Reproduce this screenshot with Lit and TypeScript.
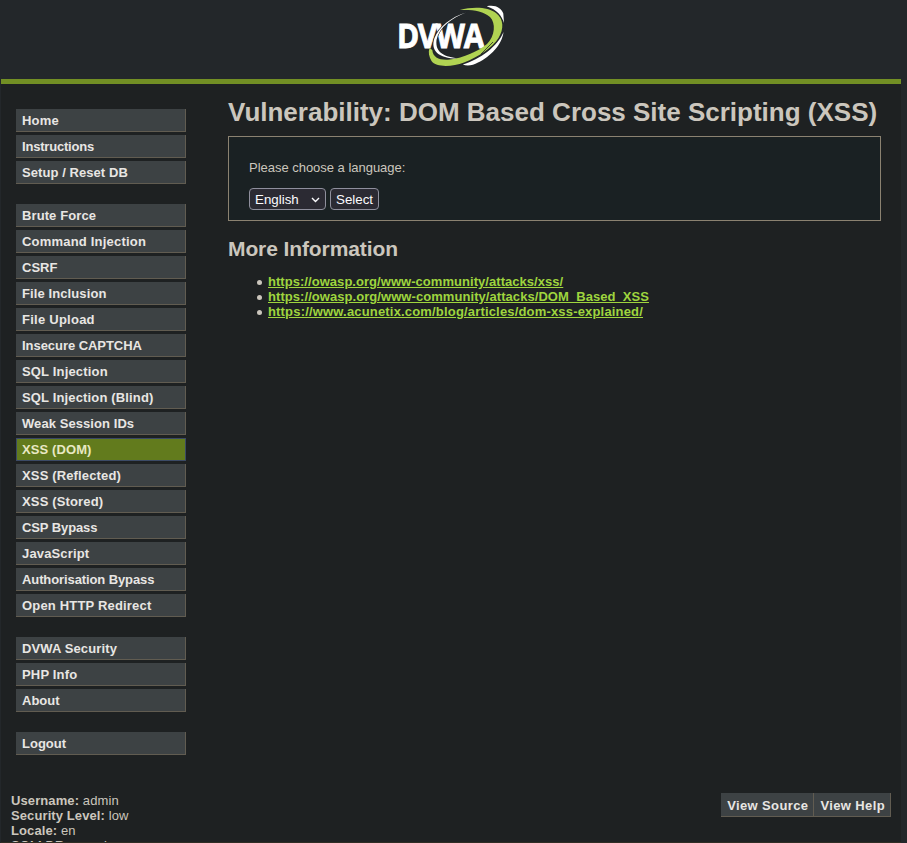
import { LitElement, html, css } from "lit";
import { customElement } from "lit/decorators.js";
import { styleMap } from "lit/directives/style-map.js";

type Tracked = [text: string, tracking: number];

const MENU: Tracked[][] = [
  [["Home", 0.2], ["Instructions", -0.2], ["Setup / Reset DB", 0.07]],
  [
    ["Brute Force", 0.1], ["Command Injection", 0.2], ["CSRF", 0], ["File Inclusion", 0.1],
    ["File Upload", 0.25], ["Insecure CAPTCHA", -0.05], ["SQL Injection", 0.17],
    ["SQL Injection (Blind)", 0.15], ["Weak Session IDs", 0.07], ["XSS (DOM)", 0.1],
    ["XSS (Reflected)", 0.15], ["XSS (Stored)", 0.15], ["CSP Bypass", -0.1],
    ["JavaScript", 0.15], ["Authorisation Bypass", -0.1], ["Open HTTP Redirect", 0.18],
  ],
  [["DVWA Security", 0.12], ["PHP Info", 0.18], ["About", 0]],
  [["Logout", 0]],
];

const LINKS: Tracked[] = [
  ["https://owasp.org/www-community/attacks/xss/", 0.045],
  ["https://owasp.org/www-community/attacks/DOM_Based_XSS", 0.06],
  ["https://www.acunetix.com/blog/articles/dom-xss-explained/", 0.175],
];

const tracking = (value: number) => styleMap({ letterSpacing: `${value}px` });

@customElement("app-root")
export class AppRoot extends LitElement {
  static styles = css`
    :host {
      display: block;
      box-sizing: border-box;
      width: 907px;
      height: 843px;
      overflow: hidden;
      padding: 0 6px 0 1px;
      background: #23272a;
      color: #cbc6bd;
      font: 13px/15px "Liberation Sans", Arial, sans-serif;
    }
    .page {
      height: 842px;
      overflow: hidden;
      background: #1e2122;
      border-bottom: 1px solid #302d24;
    }
    header {
      box-sizing: border-box;
      height: 84px;
      padding-top: 4px;
      background: #23272a;
      border-bottom: 5px solid #728f24;
    }
    .logo { display: block; width: 112px; height: 66px; margin-left: 396px; overflow: visible; }
    .word { font: bold 34px/1 "Open Sans", "Noto Sans", sans-serif; letter-spacing: -1.5px; fill: #fff; stroke: #fff; stroke-width: 0.9px; }
    .body { display: flex; height: 709px; }
    nav { width: 170px; margin-left: 15px; padding-top: 25px; }
    ul { list-style: none; margin: 0; padding: 0; }
    .group { margin-bottom: 20px; display: grid; gap: 3px; }
    .item, .button {
      box-sizing: border-box;
      height: 23px;
      padding: 4px 5px 0 6px;
      background: #3d4244;
      border: solid #615c51;
      border-width: 0 1px 1px 0;
      color: #e8e6e3;
      font-weight: bold;
      line-height: 16px;
      white-space: nowrap;
    }
    .item.active { background: #627b1d; border: 1px solid #3b4a66; padding: 3px 5px 0 5px; color: #e8e8c4; }
    main { margin-left: 42px; width: 653px; }
    h1 { margin: 11px 0 0; font-size: 26px; line-height: 34px; white-space: nowrap; }
    .panel {
      box-sizing: border-box;
      height: 85px;
      margin-top: 7px;
      padding: 23px 20px 0;
      border: 1px solid #8b8271;
      background: #1a2123;
    }
    .prompt { margin: 0 0 13px; letter-spacing: -0.02px; }
    .controls { display: flex; gap: 4px; }
    .control {
      box-sizing: border-box;
      display: flex;
      align-items: center;
      justify-content: space-between;
      height: 22px;
      padding: 1px 5px 0;
      border: 1px solid #8f8f9d;
      border-radius: 4px;
      background: #2b2a33;
      color: #fbfbfe;
      font: 13.333px "Liberation Sans", Arial, sans-serif;
    }
    .language { width: 77px; }
    .select { width: 49px; }
    h2 { margin: 15px 0 0; font-size: 21px; line-height: 26px; letter-spacing: -0.1px; }
    .links { margin-top: 12px; padding-left: 40px; list-style: none; }
    .links li { display: flex; align-items: center; gap: 6px; margin-left: -11px; }
    .links li::before { content: ""; width: 5px; height: 5px; margin-top: 2px; border-radius: 50%; background: #cbc6bd; }
    .links a { color: #9fd53e; font-weight: bold; text-decoration: underline; }
    footer { display: flex; justify-content: space-between; padding: 0 10px; }
    .status { letter-spacing: 0.1px; white-space: nowrap; }
    .actions { display: flex; }
    .button { height: 24px; padding: 5px 5px 0 6px; letter-spacing: 0.38px; }
  `;

  render() {
    return html`
      <div class="page">
        <header>
          <svg class="logo" viewBox="0 0 112 66">
            <text class="word" x="0" y="43.5" textLength="86" lengthAdjust="spacingAndGlyphs">DVWA</text>
            <path d="M69 8.5C54 13 42 23 37.5 34C33 47 42 55 62 54.5C48 53 38 49 39.5 36C42 23 55 14 69 8.5Z" fill="#fff" stroke="#23272a" stroke-width="1.2" paint-order="stroke" />
            <path d="M63 6C75 2.5 91 2.5 99 9C107 15 107 25 101.5 34C95 44 82 52.5 67 58.5C55 63 39 63.5 34.5 57C32 53 31 48 32.5 44L35.3 46C36 54 43 56.5 53 55.5C66 54 82 47 90 40C98 32 99 19 93 13C86 6.5 75 5.5 63 6Z" fill="#b0d352" />
            <path d="M89.7 2.2C99 0.5 104 4 106.3 9.5L107 19C105 12 100 5.5 89.7 2.2ZM106.5 28C105 41 93 53 81 58.5C76 61.5 70 62.5 65.8 60.5C83 55.5 101 42 106.5 28Z" fill="#fff" />
            <path d="M84 50L96 38" fill="none" stroke="#23272a" stroke-width="0.8" />
          </svg>
        </header>
        <div class="body">
          <nav>
            ${MENU.map((group) => html`<ul class="group">
              ${group.map(([name, gap]) => html`<li class="item ${name === "XSS (DOM)" ? "active" : ""}" style=${tracking(gap)}>${name}</li>`)}
            </ul>`)}
          </nav>
          <main>
            <h1>Vulnerability: DOM Based Cross Site Scripting (XSS)</h1>
            <section class="panel">
              <p class="prompt">Please choose a language:</p>
              <div class="controls">
                <div class="control language">English
                  <svg width="9" height="6" viewBox="0 0 9 6"><path d="M1 1L4.5 4.5L8 1" fill="none" stroke="#fbfbfe" stroke-width="1.4" /></svg>
                </div>
                <div class="control select">Select</div>
              </div>
            </section>
            <h2>More Information</h2>
            <ul class="links">${LINKS.map(([url, gap]) => html`<li><a style=${tracking(gap)}>${url}</a></li>`)}</ul>
          </main>
        </div>
        <footer>
          <div class="status">
            <div><b>Username:</b> admin</div>
            <div><b>Security Level:</b> low</div>
            <div><b>Locale:</b> en</div>
            <div><b>SQLI DB:</b> mysql</div>
          </div>
          <div class="actions"><div class="button">View Source</div><div class="button">View Help</div></div>
        </footer>
      </div>
    `;
  }
}
